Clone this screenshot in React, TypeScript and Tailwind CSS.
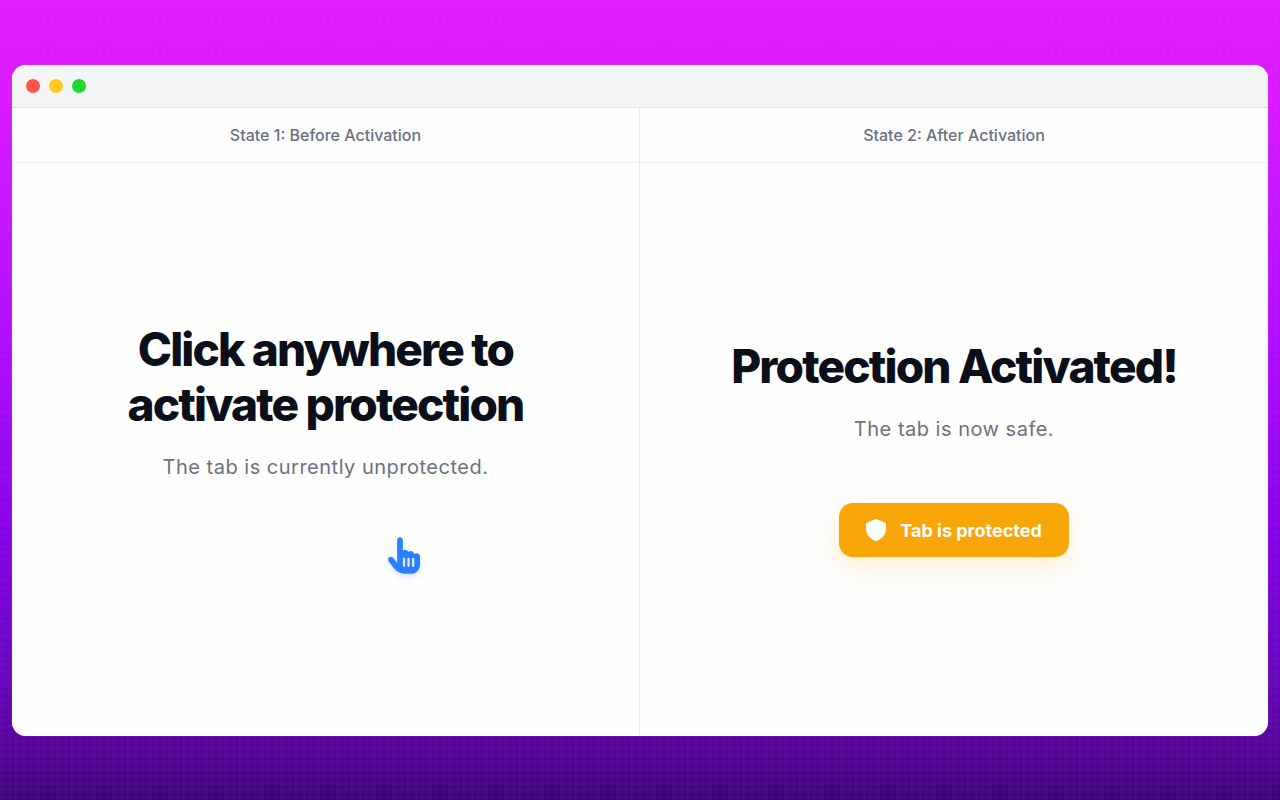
import React from 'react'
import { FaHandPointer } from 'react-icons/fa6'

const windowDots = ['bg-[#ff5449]', 'bg-[#ffc91f]', 'bg-[#1bd92f]']

interface StatePanelProps {
  label: string
  title: React.ReactNode
  message: string
  children: React.ReactNode
}

function TitleBar() {
  return (
    <div className="flex h-[43px] shrink-0 items-center gap-[9px] border-b border-[#dee2e2] bg-[#f4f6f6] px-[14px]">
      {windowDots.map((color) => (
        <span key={color} className={`size-[14px] rounded-full ${color}`} />
      ))}
    </div>
  )
}

function ShieldIcon() {
  return (
    <svg viewBox="0 0 20 22" className="h-[22px] w-5" fill="currentColor" aria-hidden="true">
      <path d="M9.2.2a2 2 0 0 1 1.6 0l7.900 3.200A2 2 0 0 1 20 5.200V9.500c0 5.400-3.200 9.900-8.800 12.200a3 3 0 0 1-2.400 0C3.200 19.400 0 14.900 0 9.500V5.200A2 2 0 0 1 1.300 3.400Z" />
    </svg>
  )
}

function StatePanel({ label, title, message, children }: StatePanelProps) {
  return (
    <section className="flex flex-col">
      <p className="border-b border-[#eff1f2] py-[15px] text-center text-[16px] leading-6 font-medium text-[#687284]">
        {label}
      </p>
      <div className="flex flex-1 flex-col items-center justify-center px-6 pb-[3px] text-center">
        <h2 className="text-[46px] leading-[55px] font-extrabold tracking-[-0.04em] text-[#0a0f1a]">{title}</h2>
        <p className="mt-[19px] text-[20px] leading-8 tracking-wide text-[#6b7280]">{message}</p>
        {children}
      </div>
    </section>
  )
}

export default function App() {
  return (
    <main className="flex min-h-screen bg-[repeating-linear-gradient(90deg,rgba(160,60,255,0.05)_0_5px,rgba(40,0,90,0.02)_5px_7px),repeating-linear-gradient(0deg,rgba(160,60,255,0.05)_0_5px,rgba(40,0,90,0.02)_5px_7px),linear-gradient(180deg,#ea1eff_0%,#e018ff_12%,#b40cff_42%,#8a00ee_65%,#6204b4_86%,#540494_93%,#3a0072_100%)] px-3 pt-[65px] pb-16 font-['Inter',sans-serif]">
      <div className="flex flex-1 flex-col overflow-hidden rounded-[14px] bg-[#fefefe] shadow-[0_0_1px_rgba(255,255,255,0.5)]">
        <TitleBar />
        <div className="grid flex-1 grid-cols-2 divide-x divide-[#e9ebed]">
          <StatePanel
            label="State 1: Before Activation"
            title={
              <>
                Click anywhere to
                <br />
                activate protection
              </>
            }
            message="The tab is currently unprotected."
          >
            <FaHandPointer className="mt-[54px] ml-[156px] h-[37px] w-8 text-[#2b7fff] drop-shadow-md drop-shadow-blue-500/20" />
          </StatePanel>
          <StatePanel
            label="State 2: After Activation"
            title="Protection Activated!"
            message="The tab is now safe."
          >
            <button
              type="button"
              className="mt-[58px] flex h-[54px] items-center gap-[14px] rounded-[14px] bg-[#f9a708] px-[27px] text-[18px] font-bold text-white shadow-[0_10px_24px_rgba(249,167,8,0.18)]"
            >
              <ShieldIcon />
              Tab is protected
            </button>
          </StatePanel>
        </div>
      </div>
    </main>
  )
}
